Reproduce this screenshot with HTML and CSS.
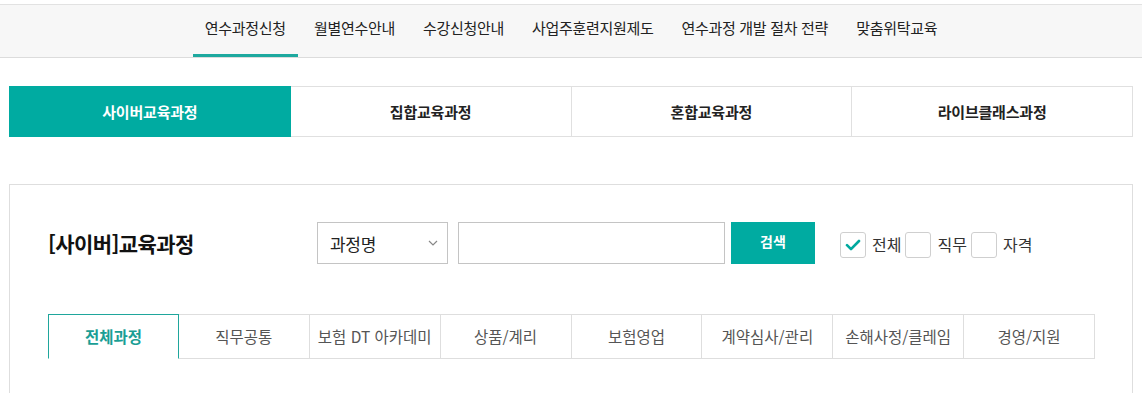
FILE: index.html
```html
<!DOCTYPE html>
<html lang="ko">
<head>
<meta charset="utf-8">
<title>사이버교육과정</title>
<link rel="stylesheet" href="styles.css">
</head>
<body>
<header class="gnb">
  <ul class="gnb-list">
    <li><a class="gnb-link is-active" href="#">연수과정신청</a></li>
    <li><a class="gnb-link" href="#">월별연수안내</a></li>
    <li><a class="gnb-link" href="#">수강신청안내</a></li>
    <li><a class="gnb-link" href="#">사업주훈련지원제도</a></li>
    <li><a class="gnb-link" href="#">연수과정 개발 절차 전략</a></li>
    <li><a class="gnb-link" href="#">맞춤위탁교육</a></li>
  </ul>
</header>

<main class="container">
  <nav class="type-tabs">
    <a class="type-tab is-active" href="#">사이버교육과정</a>
    <a class="type-tab" href="#">집합교육과정</a>
    <a class="type-tab" href="#">혼합교육과정</a>
    <a class="type-tab" href="#">라이브클래스과정</a>
  </nav>

  <section class="course-box">
    <div class="search-row">
      <h2 class="course-title">[사이버]교육과정</h2>
      <div class="select">
        <span class="select-text">과정명</span>
        <svg class="select-arrow" width="10" height="6" viewBox="0 0 10 6"><path d="M1 1l4 4 4-4" fill="none" stroke="#888" stroke-width="1.2"/></svg>
      </div>
      <div class="search-input"></div>
      <button class="search-btn" type="button">검색</button>
      <div class="checks">
        <label class="check">
          <span class="check-box is-checked">
            <svg width="16" height="12" viewBox="0 0 16 12"><path d="M2 6.2l4 4L14 2" fill="none" stroke="#00a99f" stroke-width="2.6" stroke-linecap="round" stroke-linejoin="round"/></svg>
          </span>
          <span class="check-label">전체</span>
        </label>
        <label class="check">
          <span class="check-box"></span>
          <span class="check-label">직무</span>
        </label>
        <label class="check">
          <span class="check-box"></span>
          <span class="check-label">자격</span>
        </label>
      </div>
    </div>

    <ul class="cat-tabs">
      <li class="cat-tab is-active">전체과정</li>
      <li class="cat-tab">직무공통</li>
      <li class="cat-tab">보험 DT 아카데미</li>
      <li class="cat-tab">상품/계리</li>
      <li class="cat-tab">보험영업</li>
      <li class="cat-tab">계약심사/관리</li>
      <li class="cat-tab">손해사정/클레임</li>
      <li class="cat-tab">경영/지원</li>
    </ul>
  </section>
</main>
</body>
</html>
```

FILE: styles.css
```css
* {
  box-sizing: border-box;
}

html, body {
  margin: 0;
  padding: 0;
  background: #fff;
}

body {
  font-family: "Noto Sans CJK KR", "Noto Sans", sans-serif;
  color: #222;
}

ul {
  margin: 0;
  padding: 0;
  list-style: none;
}

a {
  color: inherit;
  text-decoration: none;
}

/* top navigation */
.gnb {
  margin-top: 4px;
  background: #f7f7f7;
  border-top: 1px solid #e2e2e2;
  border-bottom: 1px solid #dcdcdc;
}

.gnb-list {
  display: flex;
  justify-content: center;
  gap: 4px;
}

.gnb-link {
  display: block;
  height: 52px;
  padding: 0 12px;
  line-height: 46px;
  font-size: 15px;
  letter-spacing: -0.3px;
  color: #222;
  border-bottom: 3px solid transparent;
}

.gnb-link.is-active {
  border-bottom-color: #1ea99f;
}

/* content */
.container {
  margin: 28px 9px 0;
}

.type-tabs {
  display: flex;
  height: 51px;
}

.type-tab {
  flex: 1;
  display: flex;
  align-items: center;
  justify-content: center;
  font-size: 15px;
  font-weight: 700;
  letter-spacing: -0.2px;
  color: #222;
  background: #fff;
  border: 1px solid #e0e0e0;
  border-left: none;
}

.type-tab:first-child {
  border-left: 1px solid #e0e0e0;
}

.type-tab.is-active {
  background: #00aba1;
  border-color: #00aba1;
  color: #fff;
}

.course-box {
  margin-top: 47px;
  border: 1px solid #dedede;
  padding: 37px 37px 80px 38px;
}

.search-row {
  display: flex;
  align-items: center;
  height: 42px;
}

.course-title {
  margin: 0;
  width: 269px;
  font-size: 21px;
  font-weight: 700;
  color: #111;
  letter-spacing: -0.6px;
}

.select {
  width: 131px;
  height: 42px;
  border: 1px solid #c4c4c4;
  display: flex;
  align-items: center;
  justify-content: space-between;
  padding: 0 9px 0 12px;
  background: #fff;
}

.select-text {
  font-size: 17px;
  letter-spacing: -0.3px;
  color: #222;
}

.select-arrow {
  display: block;
}

.search-input {
  width: 267px;
  height: 42px;
  margin-left: 10px;
  border: 1px solid #c4c4c4;
  background: #fff;
}

.search-btn {
  width: 84px;
  height: 42px;
  margin-left: 6px;
  border: none;
  background: #00aba1;
  color: #fff;
  font-family: inherit;
  font-size: 14px;
  font-weight: 700;
  letter-spacing: 0;
  padding: 0 0 4px;
}

.checks {
  display: flex;
  align-items: center;
  margin-left: 25px;
  padding-top: 3px;
}

.check {
  display: flex;
  align-items: center;
}

.check-box {
  width: 26px;
  height: 26px;
  border: 1px solid #cfcfcf;
  border-radius: 3px;
  background: #fff;
  display: flex;
  align-items: center;
  justify-content: center;
}

.check-label {
  margin-left: 6px;
  margin-right: 4px;
  font-size: 16px;
  color: #333;
  padding-bottom: 2px;
}

/* category tabs */
.cat-tabs {
  display: grid;
  grid-template-columns: repeat(8, 1fr);
  margin-top: 50px;
}

.cat-tab {
  height: 45px;
  display: flex;
  align-items: center;
  justify-content: center;
  font-size: 15.5px;
  color: #555;
  border: 1px solid #dedede;
  border-left: none;
  padding-bottom: 1px;
  white-space: nowrap;
}

.cat-tab:first-child {
  border-left: 1px solid #dedede;
}

.cat-tab.is-active {
  border-color: #1fa69c;
  border-bottom-color: #fff;
  color: #1a9e95;
  font-weight: 700;
}
```
